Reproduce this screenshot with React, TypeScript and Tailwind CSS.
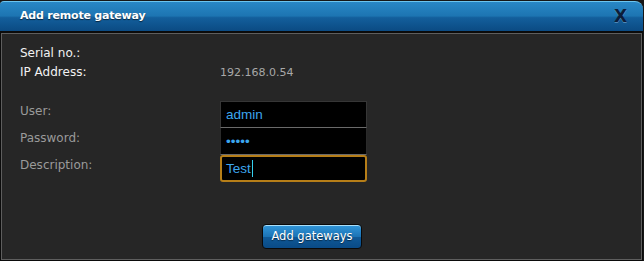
export default function App() {
  return (
    <div className="w-[644px] h-[261px] overflow-hidden bg-[#161616] pt-px font-['DejaVu_Sans',sans-serif]">
      <div className="w-[643px] bg-[#0b0b0b] rounded-tl-[4px] rounded-tr-[8px]">
        {/* header */}
        <div className="h-[30px] flex items-center justify-between pl-5 pr-[16px] rounded-tl-[4px] rounded-tr-[8px] border-t border-[#6cc4ee] bg-[linear-gradient(to_bottom,#2887c6_0%,#1d75b2_48%,#135f9c_54%,#0b4b83_100%)]">
          <span className="text-white font-bold text-[11px] tracking-[-0.2px] [text-shadow:0_1px_1px_rgba(0,0,0,0.6)]">
            Add remote gateway
          </span>
          <span className="text-[#0c1d3a] text-[17px] font-bold leading-none [text-shadow:0_1px_0_rgba(160,200,230,0.45)]">
            X
          </span>
        </div>

        <div className="pt-[2px] px-px pb-px">
          <div className="h-[227px] border border-[#5e5e5e] bg-[#262626] pl-[18px] pt-[10px]">
            <div className="grid grid-cols-[200px_1fr] text-[12px] leading-[19px]">
              <div className="text-[#f2f2f2]">Serial no.:</div>
              <div />
              <div className="text-[#f2f2f2]">IP Address:</div>
              <div className="text-[#a8a8a8] text-[11px]">192.168.0.54</div>
            </div>

            <div className="mt-[19px] grid grid-cols-[200px_147px] text-[12px] leading-[19px]">
              <div className="h-[27px] pt-px text-[#9a9a9a]">User:</div>
              <div className="h-[27px] bg-black border border-[#363636] border-b-[#6a6a6a] px-[5px] flex items-center text-[13.5px] text-[#3ca6ee] font-['Liberation_Sans',sans-serif]">
                admin
              </div>

              <div className="h-[27px] pt-px text-[#9a9a9a]">Password:</div>
              <div className="h-[27px] bg-black border border-[#2a2a2a] border-t-0 border-b-[#6a6a6a] px-[5px] flex items-center text-[13.5px] text-[#3ca6ee] font-['Liberation_Sans',sans-serif]">
                •••••
              </div>

              <div className="h-[27px] pt-px text-[#9a9a9a]">Description:</div>
              <div className="h-[27px] bg-black border-2 border-[#b67e18] rounded-[3px] px-[4px] flex items-center text-[13.5px] text-[#3ca6ee] font-['Liberation_Sans',sans-serif]">
                Test
                <span className="ml-px w-px h-[17px] bg-[#35d0f0]" />
              </div>
            </div>

            <button className="mt-[42px] ml-[242px] w-[100px] h-[25px] rounded-[4px] border border-[#0a0a0a] bg-[linear-gradient(to_bottom,#3297da_0%,#1c74b6_50%,#0f5a98_52%,#0a4a86_100%)] shadow-[inset_0_1px_0_#a9def9] text-white text-[11.5px] [text-shadow:0_1px_1px_rgba(0,0,0,0.5)]">
              Add gateways
            </button>
          </div>
        </div>
      </div>
    </div>
  );
}
